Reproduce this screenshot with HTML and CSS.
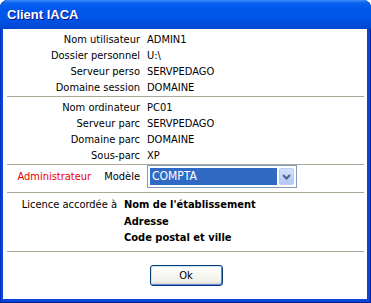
FILE: index.html
```html
<!DOCTYPE html>
<html lang="fr">
<head>
  <meta charset="UTF-8" />
  <title>Client IACA</title>
  <link rel="stylesheet" href="styles.css">
</head>
<body>
  <div class="window">
    <div class="titlebar">Client IACA</div>
    <div class="client">

      <div class="grid">
        <span class="label">Nom utilisateur</span><span>ADMIN1</span>
        <span class="label">Dossier personnel</span><span>U:\</span>
        <span class="label">Serveur perso</span><span>SERVPEDAGO</span>
        <span class="label">Domaine session</span><span>DOMAINE</span>
      </div>
      <div class="sep"></div>

      <div class="grid second">
        <span class="label">Nom ordinateur</span><span>PC01</span>
        <span class="label">Serveur parc</span><span>SERVPEDAGO</span>
        <span class="label">Domaine parc</span><span>DOMAINE</span>
        <span class="label">Sous-parc</span><span>XP</span>
      </div>
      <div class="sep"></div>

      <div class="grid model">
        <span class="label admin-row"><span class="admin">Administrateur</span><span>Modèle</span></span>
        <div class="combo">
          <span class="combo-value">COMPTA</span>
          <span class="combo-btn">
            <svg width="9" height="6" viewBox="0 0 9 6"><polyline points="1,1 4.5,4.5 8,1" fill="none" stroke="#4d6185" stroke-width="2"/></svg>
          </span>
        </div>
      </div>
      <div class="sep"></div>

      <div class="licence">
        <span class="label">Licence accordée à</span>
        <div class="lic-values">
          <span>Nom de l'établissement</span>
          <span>Adresse</span>
          <span>Code postal et ville</span>
        </div>
      </div>
      <div class="sep"></div>

      <div class="actions">
        <button class="btn">Ok</button>
      </div>
    </div>
  </div>
</body>
</html>
```

FILE: styles.css
```css
body {
  margin: 0;
  font-family: 'DejaVu Sans Condensed', 'Liberation Sans', Arial, sans-serif;
  font-size: 11px;
  color: #000;
  background: #fff;
}
.window {
  width: 371px;
  height: 303px;
  box-sizing: border-box;
  display: flex;
  flex-direction: column;
  background: #0846d8;
  border-radius: 8px 8px 0 0;
  box-shadow: inset 0 -1px 0 #001ea0, inset -1px 0 0 #001ea0, inset 1px 0 0 #0030c8;
  overflow: hidden;
}
.titlebar {
  height: 29px;
  flex: none;
  box-sizing: border-box;
  padding: 6px 0 0 7px;
  font-family: 'Liberation Sans', Arial, sans-serif;
  font-weight: bold;
  font-size: 13px;
  line-height: 18px;
  color: #fff;
  text-shadow: 1px 1px #0f1089;
  background: linear-gradient(to bottom, #3d8dfb 0, #0a62f0 3px, #0058ee 8px, #0056e8 18px, #004cda 25px, #0044cc 29px);
}
.client {
  flex: 1;
  margin: 0 4px 4px 3px;
  background: #fff;
  padding: 3px 3px 0 4px;
}
.grid {
  display: grid;
  grid-template-columns: 133px 1fr;
  column-gap: 7px;
  line-height: 16px;
}
.label { text-align: right; }
.sep {
  height: 1px;
  background: #aca899;
  margin: 0 0 3px;
}
.grid.second .label { line-height: 16px; }
.grid.model {
  align-items: center;
  margin-top: -3px;
}
.admin-row {
  display: flex;
  justify-content: flex-end;
  gap: 13px;
}
.admin { color: #e80000; }
.combo {
  width: 150px;
  height: 23px;
  box-sizing: border-box;
  border: 1px solid #7f9db9;
  padding: 2px;
  display: flex;
  gap: 2px;
}
.combo-value {
  flex: 1;
  background: #316ac5;
  color: #fff;
  padding-left: 2px;
  line-height: 17px;
  font-size: 12px;
}
.combo-btn {
  width: 15px;
  box-sizing: border-box;
  border: 1px solid #b9cdf6;
  border-radius: 2px;
  background: linear-gradient(to bottom, #d3e0fd, #b2c8f8);
  display: flex;
  align-items: center;
  justify-content: center;
}
.model + .sep { margin-top: 4px; }
.licence {
  display: grid;
  grid-template-columns: 110px 1fr;
  column-gap: 7px;
  line-height: 16px;
  padding-top: 1px;
  padding-bottom: 5px;
}
.lic-values {
  display: flex;
  flex-direction: column;
  font-weight: bold;
  gap: 0.5px;
}
.actions {
  display: flex;
  justify-content: center;
  padding-top: 10px;
  padding-left: 1px;
}
.btn {
  width: 73px;
  height: 21px;
  font-family: inherit;
  font-size: 11px;
  border: 1px solid #003c74;
  border-radius: 3px;
  background: linear-gradient(to bottom, #fff, #f0f0ea 80%, #d6d0c5);
  box-shadow: inset -1px -1px 0 #6982ee, inset 1px 1px 0 #cee7ff;
  padding: 0;
}
```
